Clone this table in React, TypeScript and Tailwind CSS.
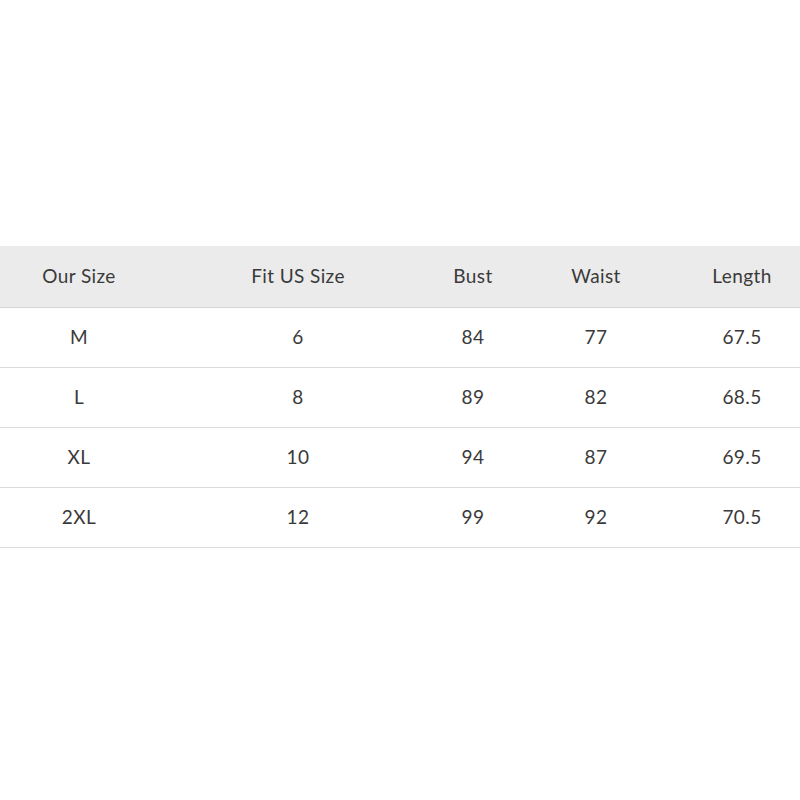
const headers = ["Our Size", "Fit US Size", "Bust", "Waist", "Length"];

const rows = [
  ["M", "6", "84", "77", "67.5"],
  ["L", "8", "89", "82", "68.5"],
  ["XL", "10", "94", "87", "69.5"],
  ["2XL", "12", "99", "92", "70.5"],
];

const cols = "grid grid-cols-[158px_280px_70px_176px_116px]";

export default function App() {
  return (
    <div className="w-[800px] h-[800px] bg-white pt-[246px] text-[19px] tracking-[0.4px] text-[#3a3a3a]" style={{ fontFamily: "Lato, 'Open Sans', sans-serif" }}>
      <div className={`${cols} h-[62px] bg-[#ebebeb] border-b border-[#d6d6d6] items-center`}>
        {headers.map((h) => (
          <div key={h} className="text-center">{h}</div>
        ))}
      </div>
      {rows.map((r) => (
        <div key={r[0]} className={`${cols} h-[60px] border-b border-[#dcdcdc] items-center`}>
          {r.map((c, i) => (
            <div key={i} className="text-center">{c}</div>
          ))}
        </div>
      ))}
    </div>
  );
}
